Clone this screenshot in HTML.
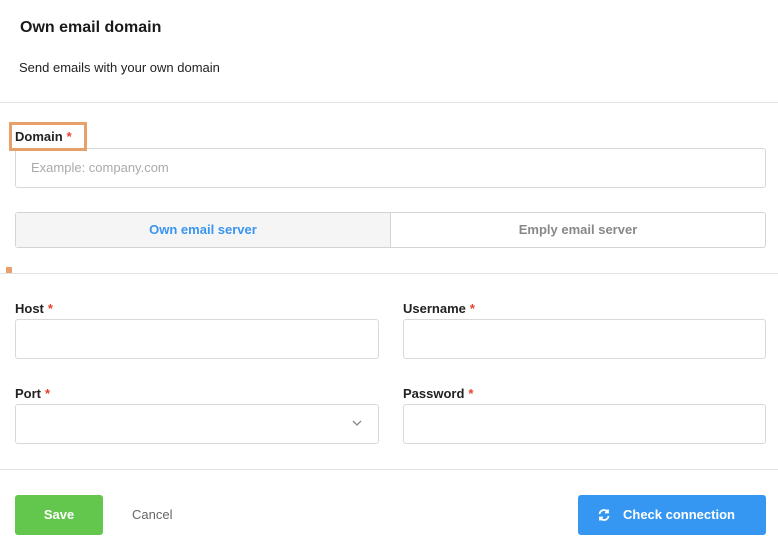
<!DOCTYPE html>
<html><head><style>
*{box-sizing:border-box;margin:0;padding:0}
body{width:778px;height:551px;background:#fff;font-family:"Liberation Sans",sans-serif;position:relative;overflow:hidden;color:#222}
.a{position:absolute}
.lbl{font-size:13px;font-weight:bold;color:#222}
.lbl i{color:#e8412c;font-style:normal;margin-left:4px}
.in{position:absolute;border:1px solid #d9d9d9;border-radius:3px;background:#fff;height:40px}
.hr{position:absolute;left:0;width:778px;height:1px;background:#e3e3e3}
</style></head><body>
<div class="a" style="left:20px;top:19px;font-size:16px;font-weight:bold;color:#1a1a1a">Own email domain</div>
<div class="a" style="left:19px;top:60px;font-size:13px;color:#222">Send emails with your own domain</div>
<div class="hr" style="top:102px"></div>
<div class="in" style="left:15px;top:148px;width:751px"></div>
<div class="a" style="left:31px;top:160px;font-size:13px;color:#aaa">Example: company.com</div>
<div class="a" style="left:9px;top:122px;width:78px;height:29px;border:3px solid #e8a06a;z-index:2"></div>
<div class="a lbl" style="left:15px;top:129px;z-index:3">Domain<i>*</i></div>
<div class="a" style="left:15px;top:212px;width:751px;height:36px;border:1px solid #d4d4d4;border-radius:3px;display:flex;font-size:13px;font-weight:bold">
<div style="flex:0 0 375px;background:#f5f5f5;border-right:1px solid #d4d4d4;color:#3a95f0;text-align:center;line-height:34px">Own email server</div>
<div style="flex:1;color:#888;text-align:center;line-height:34px">Emply email server</div></div>
<div class="a" style="left:6px;top:267px;width:6px;height:6px;background:#e8a06a"></div>
<div class="hr" style="top:273px"></div>
<div class="a lbl" style="left:15px;top:301px">Host<i>*</i></div>
<div class="a lbl" style="left:403px;top:301px">Username<i>*</i></div>
<div class="in" style="left:15px;top:319px;width:364px"></div>
<div class="in" style="left:403px;top:319px;width:363px"></div>
<div class="a lbl" style="left:15px;top:386px">Port<i>*</i></div>
<div class="a lbl" style="left:403px;top:386px">Password<i>*</i></div>
<div class="in" style="left:15px;top:404px;width:364px"></div>
<svg class="a" style="left:352px;top:419px" width="10" height="8"><path d="M1 2l4 4 4-4" fill="none" stroke="#888" stroke-width="1.3"/></svg>
<div class="in" style="left:403px;top:404px;width:363px"></div>
<div class="hr" style="top:469px"></div>
<div class="a" style="left:15px;top:495px;width:88px;height:40px;background:#63c74d;border-radius:3px;color:#fff;font-weight:bold;font-size:13px;text-align:center;line-height:40px">Save</div>
<div class="a" style="left:132px;top:507px;font-size:13px;color:#666">Cancel</div>
<div class="a" style="left:578px;top:495px;width:188px;height:40px;background:#3597f2;border-radius:3px;color:#fff;font-weight:bold;font-size:13px;line-height:40px;padding-left:45px">Check connection</div>
<svg class="a" style="left:597px;top:508px" width="14" height="14" viewBox="0 0 14 14" fill="none" stroke="#fff" stroke-width="1.8"><path d="M2.5 6A4.5 4.5 0 0 1 11 4.5M11.5 8A4.5 4.5 0 0 1 3 9.5"/><path d="M11 1.5v3h-3M3 12.5v-3h3"/></svg>
</body></html>
